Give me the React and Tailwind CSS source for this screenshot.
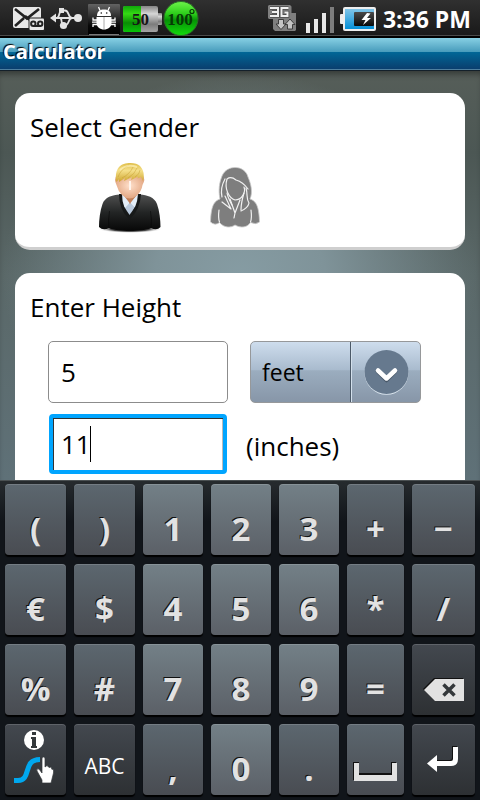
import React, { useState } from "react";

const MailIcon = () => (
  <svg className="h-9 w-8 shrink-0" viewBox="13 0 32 36" aria-label="Voicemail">
    <rect x="13" y="7" width="28" height="21" rx="2" fill="#e8e8e8" />
    <path d="M15 9 L27 18.500 L39 9 M24 18 L15 26" stroke="#222" strokeWidth="2.600" fill="none" />
    <rect x="28.5" y="17.5" width="17" height="14" fill="#222" />
    <path d="M25 16 L30 20" stroke="#222" strokeWidth="2.600" />
    <rect x="29.5" y="18.5" width="14.5" height="11.5" rx="1" fill="#e8e8e8" />
    <g fill="none" stroke="#222" strokeWidth="2">
      <circle cx="33.3" cy="23.700" r="2.2" />
      <circle cx="40.200" cy="23.700" r="2.2" />
      <path d="M33 26 H40.5" />
    </g>
  </svg>
);

const UsbIcon = () => (
  <svg className="h-9 w-8 shrink-0" viewBox="50 0 32 36" aria-label="USB connected">
    <path d="M55 18 H76 M57 18 C60 17.500 58.500 10.500 62 10.500 H65 C69.500 10.500 67.500 17.500 72 18 M60 18 C63 18.500 60 25.500 64 25.500 C70 25.500 67.500 18.500 72 18" fill="none" stroke="#e4e4e4" strokeWidth="1.800" />
    <path d="M50 18 L56 13.500 V22.500 Z" fill="#e4e4e4" />
    <circle cx="78" cy="18" r="4" fill="#e4e4e4" />
    <circle cx="63.500" cy="25.500" r="3.600" fill="#e4e4e4" />
    <rect x="59" y="8" width="5" height="5" fill="#e4e4e4" />
  </svg>
);

const DebugIcon = () => (
  <svg className="h-9 w-8 shrink-0" viewBox="88 0 32 36" aria-label="USB debugging">
    <defs>
      <linearGradient id="debug" x1="0" y1="0" x2="0" y2="1">
        <stop offset="0" stopColor="#636363" />
        <stop offset=".7" stopColor="#080808" />
        <stop offset="1" stopColor="#000" />
      </linearGradient>
    </defs>
    <rect x="88" y="4" width="32" height="31" rx="1" fill="url(#debug)" />
    <path d="M89 34.500 H119" stroke="#777" />
    <path d="M97 16 C97 11 100 9.500 104 9.500 C108 9.500 111 11 111 16 Z" fill="#fff" />
    <path d="M100 10.500 L98.500 7 M108 10.500 L109.500 7" stroke="#fff" strokeWidth="1.300" />
    <path d="M96.500 17 H111.500 V23 C111.500 27 108 29.500 104 29.500 C100 29.500 96.500 27 96.500 23 Z" fill="#fff" />
    <path d="M104 17 V29" stroke="#aaa" />
    <circle cx="101.300" cy="13" r=".8" fill="#111" />
    <circle cx="106.700" cy="13" r=".8" fill="#111" />
    <path d="M97 20 H93 V17.500 M97 22.200 H92 M97 24.500 H93 V27 M111 20 H115 V17.500 M111 22.200 H116 M111 24.500 H115 V27" fill="none" stroke="#fff" strokeWidth="1.300" />
  </svg>
);

const PercentBattery = () => (
  <svg className="h-9 w-10 shrink-0" viewBox="123 0 40 36" aria-label="Battery 50 percent">
    <defs>
      <linearGradient id="cell-green" x1="0" y1="0" x2="0" y2="1">
        <stop offset="0" stopColor="#0fa60a" />
        <stop offset=".3" stopColor="#35d914" />
        <stop offset=".65" stopColor="#0a8c05" />
        <stop offset="1" stopColor="#08c408" />
      </linearGradient>
      <linearGradient id="cell-grey" x1="0" y1="0" x2="0" y2="1">
        <stop offset="0" stopColor="#858585" />
        <stop offset=".3" stopColor="#d6d6d6" />
        <stop offset=".7" stopColor="#7c7c7c" />
        <stop offset="1" stopColor="#a4a4a4" />
      </linearGradient>
    </defs>
    <rect x="156" y="13" width="6" height="12" rx="1" fill="url(#cell-grey)" />
    <rect x="123" y="6" width="35" height="26" rx="2" fill="url(#cell-grey)" />
    <path d="M125 6 H141 V32 H125 Q123 32 123 30 V8 Q123 6 125 6 Z" fill="url(#cell-green)" />
    <text x="140.500" y="25" textAnchor="middle" className="font-['Liberation_Serif',serif] text-[17px] font-bold" fill="#161616">50</text>
  </svg>
);

const Temperature = () => (
  <svg className="h-9 w-9 shrink-0" viewBox="162 0 36 36" aria-label="Temperature 100 degrees">
    <defs>
      <linearGradient id="temp" x1="0" y1="0" x2="0" y2="1">
        <stop offset="0" stopColor="#6df24a" />
        <stop offset=".35" stopColor="#2fd01c" />
        <stop offset=".55" stopColor="#069206" />
        <stop offset="1" stopColor="#12dc0c" />
      </linearGradient>
    </defs>
    <circle cx="180" cy="18.500" r="17" fill="url(#temp)" stroke="#2c6b28" />
    <text x="179" y="25" textAnchor="middle" className="font-['Liberation_Serif',serif] text-[17px] font-bold" fill="#063a05">100</text>
    <circle cx="191" cy="11.500" r="2" fill="none" stroke="#063a05" strokeWidth="1.200" />
  </svg>
);

const NetworkIcon = () => (
  <svg className="h-9 w-8 shrink-0" viewBox="268 0 32 36" aria-label="3G">
    <path d="M268 6 L269 5 H290 L291.500 6.500 V13 H296 V30 L295 31 H275 L273 29 V19 H269 L268 18 Z" fill="#7f7f7f" />
    <path d="M270 8 H278 V16 H270 M272 12 H278 M288.500 8 H281.500 V16 H287.500 V12.500 H284.500" fill="none" stroke="#4a4a4a" strokeWidth="3.600" />
    <path d="M270 8 H278 V16 H270 M272 12 H278 M288.500 8 H281.500 V16 H287.500 V12.500 H284.500" fill="none" stroke="#f0f0f0" strokeWidth="2" />
    <path d="M278.500 19.500 H283.500 V24 H286 L281 29.500 L276 24 H278.500 Z M287.500 29 H292.500 V24.500 H295 L290 19 L285 24.500 H287.500 Z" fill="#c4c4c4" stroke="#333" strokeWidth=".9" />
  </svg>
);

const SignalIcon = () => (
  <svg className="h-9 w-8 shrink-0" viewBox="304 0 32 36" aria-label="Signal strength">
    <path d="M306 23 h4 v10 h-4 Z M314 19 h4 v14 h-4 Z M322 13 h4 v20 h-4 Z" fill="#e8e8e8" />
    <path d="M330 7 h4 v26 h-4 Z" fill="#7d7d7d" />
  </svg>
);

const ChargingIcon = () => (
  <svg className="h-9 w-9 shrink-0" viewBox="340 0 36 36" aria-label="Charging">
    <defs>
      <linearGradient id="charge" x1="0" y1="0" x2="0" y2="1">
        <stop offset="0" stopColor="#82c5e8" />
        <stop offset="1" stopColor="#0590d8" />
      </linearGradient>
      <linearGradient id="charge-empty" x1="0" y1="0" x2="0" y2="1">
        <stop offset="0" stopColor="#4a4a4a" />
        <stop offset="1" stopColor="#0a0a0a" />
      </linearGradient>
    </defs>
    <rect x="340" y="14" width="4" height="10" rx="1" fill="#eee" />
    <rect x="343" y="7" width="33" height="24" rx="2" fill="#eee" />
    <rect x="345" y="9" width="29" height="20" fill="url(#charge)" />
    <rect x="354" y="12" width="20" height="14" rx="1" fill="url(#charge-empty)" />
    <path d="M367 13 L361.500 20 H365.500 L363 25 L371 18 H367 L370.500 13.500 Z" fill="#fff" />
  </svg>
);

const ManIcon = () => (
  <svg className="h-[72px] w-16" viewBox="98 162 64 72" aria-hidden="true">
    <defs>
      <linearGradient id="hair" x1="0" y1="0" x2="0" y2="1">
        <stop offset="0" stopColor="#dfbd48" />
        <stop offset=".4" stopColor="#f5e08a" />
        <stop offset="1" stopColor="#cda42e" />
      </linearGradient>
      <radialGradient id="face" cx=".5" cy=".45" r=".6">
        <stop offset="0" stopColor="#ffe0cb" />
        <stop offset="1" stopColor="#dfa07a" />
      </radialGradient>
      <linearGradient id="sweater" x1="0" y1="0" x2="0" y2="1">
        <stop offset="0" stopColor="#4f5050" />
        <stop offset=".5" stopColor="#222424" />
        <stop offset="1" stopColor="#070707" />
      </linearGradient>
      <radialGradient id="ground">
        <stop offset=".6" stopColor="#444" />
        <stop offset="1" stopColor="#fff" stopOpacity="0" />
      </radialGradient>
    </defs>
    <ellipse cx="130" cy="229" rx="32" ry="4" fill="url(#ground)" />
    <path d="M120 194.500 C112 195 105 197 102.500 204 C100 211 99 220 99 227 Q103 231 109 228 C116 232 144 232 151 228 Q157 231 160.500 227 C160.500 220 159.500 211 157 204 C154.500 197 147 195 140 194.500 Z" fill="url(#sweater)" />
    <path d="M109.500 211 Q108 220 109 228 M150.500 211 Q152 220 151 228" fill="none" stroke="#000" opacity=".45" />
    <path d="M121.500 193 L123 205 L129.500 215 L136.500 205 L138.500 193 Z" fill="#b9c9dc" />
    <path d="M123.500 190 H136.500 V196 L130 204 L123.500 197 Z" fill="#c27f58" />
    <path d="M122 193 L129.500 203 L125 208 L121.500 201 Z M138.500 193 L130.500 203 L135.500 208 L138.500 201 Z" fill="#e3edf7" />
    <path d="M120.500 194 C120.500 204 124 212 129.500 217.500 C135 212 139 204 139.500 194" fill="none" stroke="#171919" strokeWidth="3" />
    <path d="M117 175 Q113.500 179 116.500 185 Q118 191 122 195 Q129.500 202 137.500 195 Q141.500 191 142.500 185 Q146 179 142.500 175 Z" fill="url(#face)" />
    <path d="M130 181 V190" stroke="#fff4ec" strokeWidth="2" />
    <path d="M116.500 182 C115 177 116 170 119 167 C123 162 136 161.500 140 166 C144 170 144.500 176 143 181 L141 177 L137.500 178.500 L138 176.500 L131 180 L132 177 L124 181 L125 178 L119 182 L119 179 Z" fill="url(#hair)" />
    <path d="M118 177 Q121 169 129 165 M122 178 Q130 174 133 167 M128 178 Q135 174 137 168 M135 177 Q140 174 140 170" fill="none" stroke="#bd9426" strokeWidth=".8" opacity=".5" />
    <path d="M120 170 Q127 163.500 137 167" fill="none" stroke="#fff3bd" strokeWidth="2" opacity=".65" />
  </svg>
);

const WomanIcon = () => (
  <svg className="h-[62px] w-[50px]" viewBox="210 168 50 62" aria-hidden="true">
    <path d="M220 200 C214 202 211 207 210.500 223 Q215 227 219.500 223.500 C224 229 231 229 235 226 C240 229 247 229 250.500 223.500 Q256 226 259.500 223 C259 207 256 202 250 200 C253 193 251 185 248 178 C245 166 227 165 222 177 C218 187 219 195 220 200 Z" fill="#7e7e7e" stroke="#c9c9c9" strokeWidth=".8" />
    <g fill="none" stroke="#f2f2f2" strokeWidth="1.200" strokeLinecap="round" strokeLinejoin="round">
      <path d="M227 180 C224 190 229 199 235 201 C242 201 246 193 244 188 M227 180 Q231 177 236 181 Q243 183 248 190" />
      <path d="M225 180 Q220 189 222 198 M246 189 C248 196 246 200 249 204 Q248 209 241 212" />
      <path d="M227 194 Q228 199 232 206 M225 197 L231 210 L222 203 M244 194 Q241 204 241 211" />
      <path d="M230 200 L235 214 L240 201 M235 214 L234 219" />
      <path d="M219 211 Q218 219 219.500 223 M251 211 Q252 219 250.500 223" />
    </g>
  </svg>
);

const GestureIcon = () => (
  <svg className="h-[71px] w-[61px]" viewBox="5 724 61 71" aria-hidden="true">
    <circle cx="34" cy="740" r="10" fill="#fff" />
    <path d="M32 732 h4 v3 h-4 Z M31 737 h5 v9 h1 v2 h-6 v-2 h1 v-7 h-1 Z" fill="#34383b" />
    <path d="M14 780.500 H18 C32 780.500 22 759.500 40 759.500" fill="none" stroke="#00a8ef" strokeWidth="5" />
    <path d="M42 758 Q43.500 756 45 758 V767 L47 765.500 L49 767.500 L51 767 L52 769.500 Q54 768 53.500 773 L51 783 H42 V780 L37 771 Q36 768 39 769 L42 773 Z" fill="#fff" stroke="#34383b" strokeWidth=".7" />
  </svg>
);

const SpaceIcon = () => (
  <svg className="h-[71px] w-[57px]" viewBox="347 724 57 71" aria-hidden="true">
    <path d="M353 762 h6 v11 h32 v-11 h5 v18 h-43 Z" fill="#111" />
    <path d="M354 763 h5 v12 h33 v-12 h5 v18 h-43 Z" fill="#e2e2e2" />
  </svg>
);

const DeleteIcon = () => (
  <svg className="h-[71px] w-[63px]" viewBox="412 644 63 71" aria-hidden="true">
    <path d="M423 689 L434 678 H463 V700 H434 Z" fill="#111" />
    <path d="M424 690 L435 679 H464 V701 H435 Z" fill="#e2e2e2" />
    <path d="M443.500 684.500 L454.500 695.500 M454.500 684.500 L443.500 695.500" stroke="#34383b" strokeWidth="3.500" />
  </svg>
);

const EnterIcon = () => (
  <svg className="h-[71px] w-[63px]" viewBox="412 724 63 71" aria-hidden="true">
    <path d="M454.500 746 V758 Q454.500 762.500 450 762.500 H436" fill="none" stroke="#111" strokeWidth="5" />
    <path d="M455.500 747 V759 Q455.500 763.500 451 763.500 H436" fill="none" stroke="#fff" strokeWidth="5" />
    <path d="M427 763.500 L437 755 V772 Z" fill="#fff" />
  </svg>
);

const TONES = {
  symbol: "from-[#5c676f] to-[#494c52]",
  digit: "from-[#738087] to-[#5b6067]",
  action: "from-[#43484f] to-[#2d3033]",
};

const KEYS = [
  ["(", "symbol"], [")", "symbol"], ["1", "digit"], ["2", "digit"], ["3", "digit"], ["+", "symbol"], ["−", "symbol"],
  ["€", "symbol"], ["$", "symbol"], ["4", "digit"], ["5", "digit"], ["6", "digit"], ["*", "symbol"], ["/", "symbol"],
  ["%", "symbol"], ["#", "symbol"], ["7", "digit"], ["8", "digit"], ["9", "digit"], ["=", "symbol"], ["Delete", "action", DeleteIcon],
  ["Input options", "action", GestureIcon], ["ABC", "action"], [",", "symbol"], ["0", "digit"], [".", "symbol"], ["Space", "symbol", SpaceIcon], ["Enter", "action", EnterIcon],
];

function Key({ label, tone, Icon }) {
  const face =
    label === "ABC"
      ? "pt-[14px] text-[21px] text-white"
      : "pt-[18px] text-[33px] font-bold text-[#e2e2e2] [text-shadow:-1px_-1px_0_#111]";
  return (
    <button
      type="button"
      aria-label={label}
      className={`flex h-[71px] min-w-0 items-center justify-center rounded-[4px] bg-linear-to-b leading-none shadow-[0_2px_1px_#000,inset_0_1px_0_rgba(255,255,255,0.15)] ${TONES[tone]} ${Icon ? "" : face}`}
    >
      {Icon ? <Icon /> : label}
    </button>
  );
}

function StatusBar() {
  return (
    <header className="flex h-[38px] shrink-0 items-start justify-between border-b-2 border-black bg-linear-to-b from-[#303030] to-[#191919] pr-[9px] pl-[13px] shadow-[inset_0_-1px_0_#4a4a4a]">
      <div className="flex">
        <MailIcon />
        <div className="flex gap-[6px] pl-[5px]">
          <UsbIcon />
          <DebugIcon />
        </div>
        <div className="flex pl-[3px]">
          <PercentBattery />
          <Temperature />
        </div>
      </div>
      <div className="flex">
        <div className="flex gap-1 pr-[7px]">
          <NetworkIcon />
          <SignalIcon />
          <ChargingIcon />
        </div>
        <time className="text-[23px] leading-[38px] font-bold text-white">3:36 PM</time>
      </div>
    </header>
  );
}

export default function App() {
  const [gender, setGender] = useState("male");
  return (
    <div className="flex h-screen flex-col overflow-hidden bg-black font-['Open_Sans','Noto_Sans',sans-serif] text-black">
      <StatusBar />
      <h1 className="h-[33px] shrink-0 border-b border-[#14202a] bg-[linear-gradient(#87d0e4,#479bbb_14px,#006797_14px,#0a3e6e_31px,#4e7f9f_31px)] px-[3px] text-[20px] leading-[27px] font-bold text-white [text-shadow:-1px_-1px_1px_#000]">
        Calculator
      </h1>
      <main className="flex min-h-0 flex-1 flex-col gap-[23px] overflow-hidden bg-[radial-gradient(ellipse_at_50%_50%,#869ca3_0%,#7f9399_25%,#5b676700_70%),linear-gradient(#565e59,#4c5754_20%,#5a6868_50%,#5f7178)] px-[15px] pt-[22px] shadow-[inset_0_6px_6px_-3px_rgba(0,0,0,0.4)]">
        <section className="shrink-0 rounded-[15px] border-b-3 border-[#cfcfcf] bg-white px-[15px] pt-4 pb-[13px]">
          <h2 className="text-[26px] leading-9">Select Gender</h2>
          <div className="flex items-center gap-12 pt-[17px] pl-[68px]">
            <button type="button" aria-label="Male" aria-pressed={gender === "male"} onClick={() => setGender("male")}>
              <ManIcon />
            </button>
            <button type="button" aria-label="Female" aria-pressed={gender === "female"} onClick={() => setGender("female")}>
              <WomanIcon />
            </button>
          </div>
        </section>
        <section className="shrink-0 rounded-t-[15px] bg-white px-[15px] pt-4 pb-6">
          <h2 className="text-[26px] leading-9">Enter Height</h2>
          <div className="flex items-center gap-[22px] pt-4 pl-[18px]">
            <input
              aria-label="Feet"
              defaultValue="5"
              className="h-[62px] w-[180px] rounded-[5px] border border-[#8c8c8c] bg-white px-3 text-[26px] outline-none"
            />
            <div className="relative w-[171px]">
              <select
                aria-label="Height unit"
                defaultValue="feet"
                className="block h-[62px] w-full appearance-none rounded-[5px] border border-[#96989a] bg-[linear-gradient(#cedded,#a9bbce_46%,#9badbf_48%,#8796a8)] pr-[72px] pl-[11px] text-[23px] outline-none"
              >
                <option>feet</option>
                <option>cm</option>
              </select>
              <div className="pointer-events-none absolute inset-y-px right-0 flex w-[71px] items-center justify-center border-l border-[#4b5968] shadow-[inset_1px_0_0_#d3e0ec]">
                <svg className="size-[46px]" viewBox="0 0 46 46" aria-hidden="true">
                  <circle cx="23.500" cy="23.800" r="22" fill="#dbe6ef" />
                  <circle cx="23.500" cy="23" r="22" fill="#66798e" />
                  <path d="M15 22.500 L23.500 31 L32 22.500" fill="none" stroke="#33414f" strokeWidth="4.500" strokeLinecap="round" strokeLinejoin="round" opacity=".6" />
                  <path d="M15 21.500 L23.500 29.500 L32 21.500" fill="none" stroke="#fff" strokeWidth="4.500" strokeLinecap="round" strokeLinejoin="round" />
                </svg>
              </div>
            </div>
          </div>
          <div className="flex items-center gap-[19px] pt-[11px] pl-[19px]">
            <div className="relative">
              <input
                id="inches"
                defaultValue="11"
                className="block h-[60px] w-[178px] rounded-[4px] border-4 border-[#00a5ff] bg-white px-2 text-[26px] caret-transparent shadow-[inset_1px_1px_0_#333,inset_-1px_0_0_#bbb] outline-none"
              />
              <span className="absolute top-3 left-[41px] h-9 w-px bg-black" />
            </div>
            <label htmlFor="inches" className="pt-1 text-[26px] leading-9">(inches)</label>
          </div>
        </section>
      </main>
      <div className="grid shrink-0 grid-cols-[61fr_61fr_60fr_60fr_60fr_57fr_63fr] gap-x-2 gap-y-[9px] border-t border-[#4a5052] bg-[linear-gradient(#262b2e,#11151a_40px)] px-[5px] pt-[3px] pb-[5px]">
        {KEYS.map(([label, tone, Icon]) => (
          <Key key={label} label={label} tone={tone} Icon={Icon} />
        ))}
      </div>
    </div>
  );
}
